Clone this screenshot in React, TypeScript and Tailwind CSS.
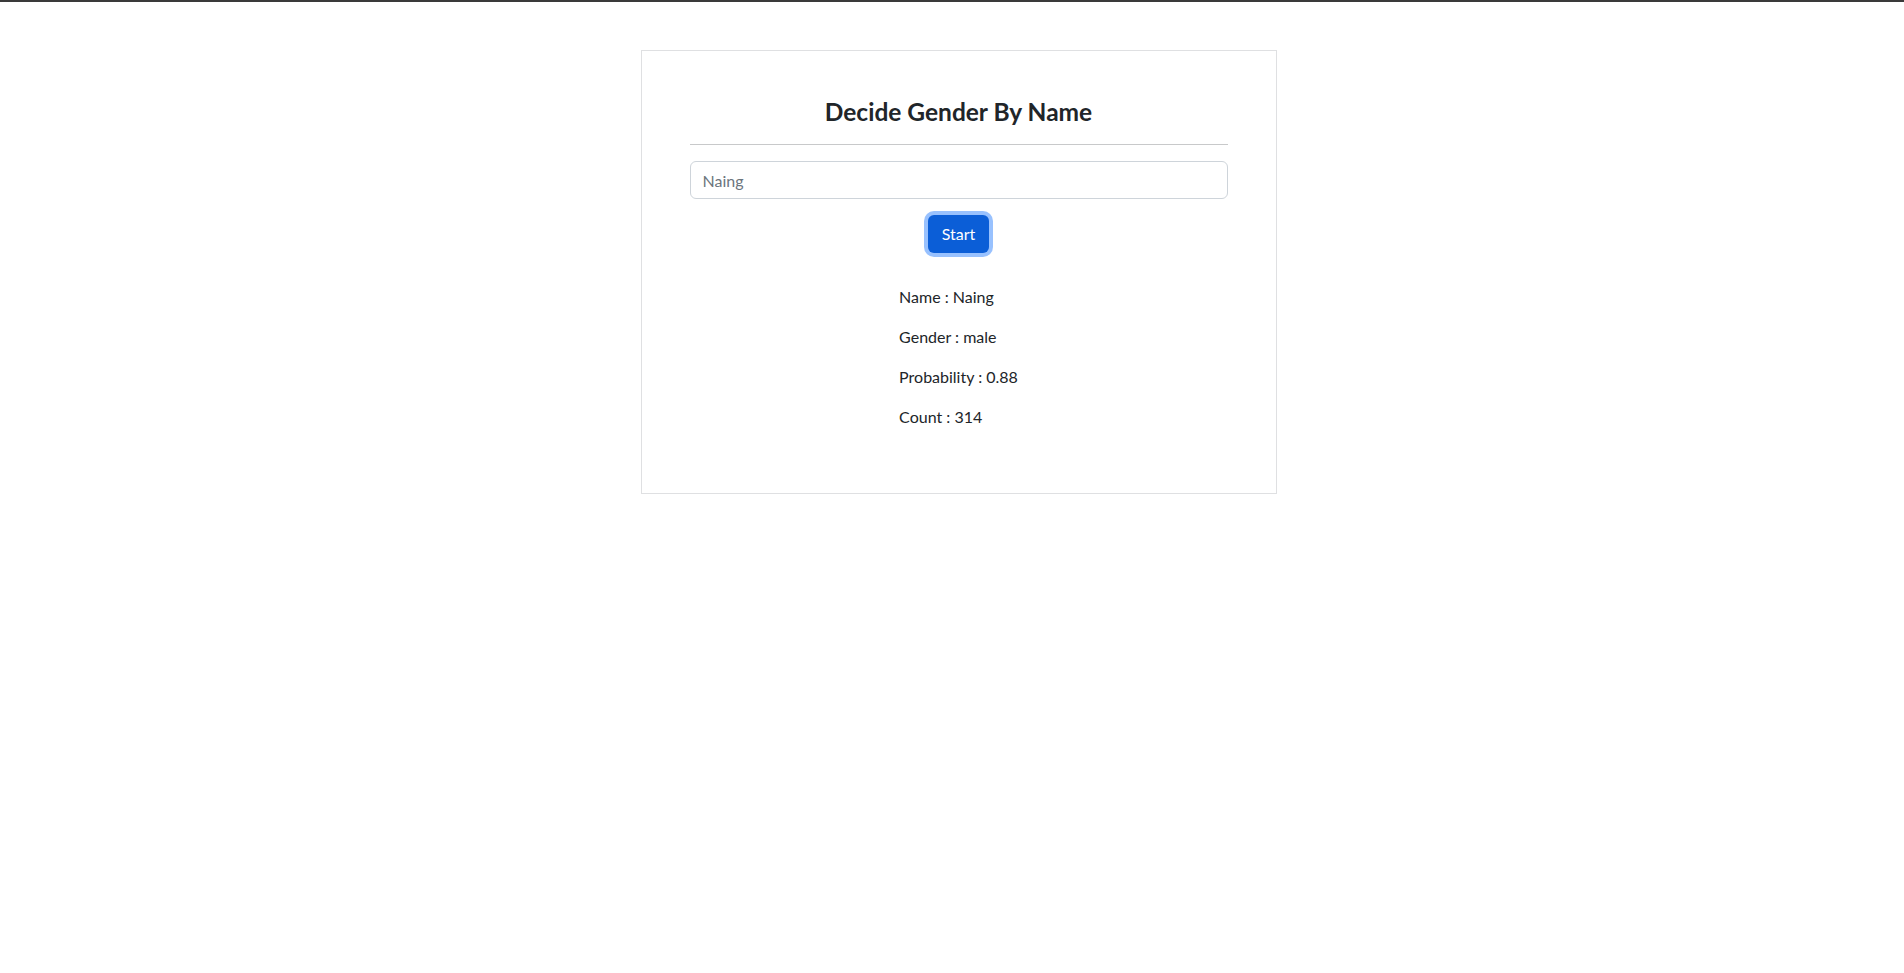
import { useState } from 'react'

type GenderResult = {
  name: string
  gender: string
  probability: number
  count: number
}

const initialResult: GenderResult = {
  name: 'Naing',
  gender: 'male',
  probability: 0.88,
  count: 314,
}

export default function App() {
  const [name, setName] = useState('')
  const [result] = useState<GenderResult>(initialResult)

  return (
    <div className="min-h-screen bg-white text-[#212529] font-['Lato','Liberation_Sans',sans-serif]">
      <div className="h-[2px] bg-[#3a3a3a]" />
      <div className="flex justify-center pl-[13px] pt-[48px]">
        <div className="w-[636px] border border-[#dfe0e2] px-[48px] pt-[48px] pb-[48px]">
          <h4 className="text-center text-[24.5px] leading-[26px] pb-[3px] font-bold">Decide Gender By Name</h4>
          <hr className="my-4 border-0 border-t border-[#c8c9ca]" />
          <input
            type="text"
            value={name}
            onChange={(e) => setName(e.target.value)}
            placeholder="Naing"
            className="block w-full h-[38px] rounded-[6px] border border-[#ced4da] px-3 text-[16px] text-[#212529] placeholder:text-[#6c757d] outline-none"
          />
          <div className="mt-4 flex justify-center">
            <button
              type="button"
              className="h-[38px] rounded-[6px] bg-[#0b5ed7] px-[14px] text-[16px] text-white shadow-[0_0_0_4px_rgba(49,132,253,0.5)]"
            >
              Start
            </button>
          </div>
          <div className="mt-[32px] flex justify-center">
            <div className="text-left text-[16px] leading-6">
              <p className="mb-4">Name : {result.name}</p>
              <p className="mb-4">Gender : {result.gender}</p>
              <p className="mb-4">Probability : {result.probability}</p>
              <p className="mb-4">Count : {result.count}</p>
            </div>
          </div>
        </div>
      </div>
    </div>
  )
}
